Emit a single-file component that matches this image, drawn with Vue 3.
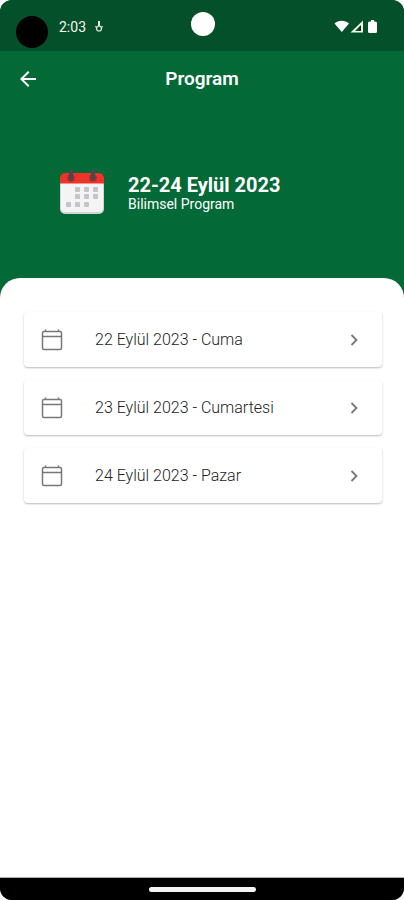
<script setup>
const days = [
  { id: 1, label: '22 Eylül 2023 - Cuma' },
  { id: 2, label: '23 Eylül 2023 - Cumartesi' },
  { id: 3, label: '24 Eylül 2023 - Pazar' },
]
const dots = [
  [26, 20], [35, 20], [44, 20],
  [26, 27], [35, 27], [44, 27],
  [17, 35], [26, 35], [35, 35],
]
</script>

<template>
  <div class="screen">
    <div class="status">
      <span class="bubble"></span>
      <span class="clock">2:03</span>
      <svg class="debug" viewBox="0 0 10 14" aria-hidden="true">
        <path d="M5 1v5" stroke-width="2" />
        <circle cx="5" cy="8.500" r="2.500" />
        <path d="M1.200 6.500L3 7.500M8.800 6.500L7 7.500" />
      </svg>
      <span class="camera"></span>
      <svg class="signals" viewBox="0 0 46 16" aria-hidden="true">
        <path d="M.5 4.500C4.500.8 11 .8 15 4.500L7.800 13z" fill="#fff" />
        <path d="M29 1.500v12H16.500z" fill="#f3f7e6" />
        <path d="M27 6v6h-6z" fill="#04502a" />
        <path d="M25.500 7.500h1.500v4h-1.500z" fill="#0b1c12" />
        <path d="M37 1h3v1.500h1.500A1.500 1.500 0 0 1 43 4v8.500a1.500 1.500 0 0 1-1.500 1.500h-6a1.500 1.500 0 0 1-1.500-1.500V4a1.500 1.500 0 0 1 1.500-1.500H37z" fill="#fff" />
      </svg>
    </div>

    <header class="bar">
      <button class="back" type="button" aria-label="Geri">
        <svg viewBox="0 0 24 24" aria-hidden="true">
          <path d="M20 11H7.830l5.590-5.590L12 4l-8 8 8 8 1.410-1.410L7.830 13H20z" />
        </svg>
      </button>
      <h1>Program</h1>
    </header>

    <section class="hero">
      <svg class="calendar" viewBox="0 0 60 48" aria-hidden="true">
        <path d="M8 13h44v27a5 5 0 0 1-5 5H13a5 5 0 0 1-5-5z" fill="#d3d5d3" />
        <path d="M9 13h42v26a4 4 0 0 1-4 4H13a4 4 0 0 1-4-4z" fill="#f4f4f4" />
        <path d="M8 14.500V9a5 5 0 0 1 5-5h34a5 5 0 0 1 5 5v5.500z" fill="#ee3328" />
        <circle cx="19" cy="9" r="3.800" fill="#a92c25" />
        <circle cx="41" cy="9" r="3.800" fill="#a92c25" />
        <path d="M19 1.500v8M41 1.500v8" stroke="#424b50" stroke-width="4" stroke-linecap="round" />
        <rect v-for="(d, i) in dots" :key="i" :x="d[0] - 3" :y="d[1] - 2" width="5" height="5" rx="1" fill="#c4c5c8" />
      </svg>
      <div>
        <h2>22-24 Eylül 2023</h2>
        <p>Bilimsel Program</p>
      </div>
    </section>

    <main class="sheet">
      <button v-for="day in days" :key="day.id" class="card" type="button">
        <svg class="day-icon" viewBox="0 0 24 24" aria-hidden="true">
          <rect x="2.500" y="3.500" width="19" height="18" rx="1.500" />
          <path d="M2.500 8.500h19M5.500 1.500v2M18.500 1.500v2" />
        </svg>
        <span class="label">{{ day.label }}</span>
        <svg class="chevron" viewBox="0 0 12 12" aria-hidden="true">
          <path d="M3.500 1l5 5-5 5" />
        </svg>
      </button>
    </main>

    <footer class="nav"><span class="handle"></span></footer>
  </div>
</template>

<style>
body {
  margin: 0;
  background: #fff;
}
</style>

<style scoped>
.screen {
  display: flex;
  flex-direction: column;
  min-height: 100vh;
  overflow: hidden;
  border-radius: 12px;
  background: #036937;
  color: #fff;
  font-family: Roboto, "Liberation Sans", sans-serif;
}
.status {
  position: relative;
  display: flex;
  align-items: center;
  box-sizing: border-box;
  height: 51px;
  padding: 2px 24px 0 16px;
  background: #04502a;
}
.bubble {
  width: 32px;
  height: 32px;
  margin: 10px 11px 0 0;
  border-radius: 50%;
  background: #000;
}
.clock {
  font-size: 14px;
  line-height: 16px;
  color: #f3f7ec;
}
.debug {
  width: 10px;
  height: 14px;
  margin-left: 8px;
  fill: none;
  stroke: #e4efdf;
  stroke-width: 1.200;
}
.camera {
  position: absolute;
  top: 12px;
  left: 50%;
  width: 24px;
  height: 24px;
  margin-left: -11px;
  border-radius: 50%;
  background: #fff;
}
.signals {
  width: 46px;
  height: 16px;
  margin-left: auto;
}
.bar {
  display: grid;
  grid-template-columns: 24px 1fr 24px;
  align-items: center;
  height: 56px;
  padding: 0 16px;
}
.back {
  width: 24px;
  height: 24px;
  padding: 0;
  border: 0;
  background: none;
}
.back svg {
  display: block;
  width: 24px;
  height: 24px;
  fill: #fff;
}
h1 {
  margin: 0;
  font-size: 19px;
  line-height: 24px;
  font-weight: 600;
  text-align: center;
}
.hero {
  display: flex;
  align-items: center;
  gap: 16px;
  box-sizing: border-box;
  height: 171px;
  padding: 0 52px;
}
.calendar {
  width: 60px;
  height: 48px;
}
h2 {
  margin: 0;
  font-size: 20px;
  line-height: 22px;
  font-weight: 700;
}
p {
  margin: 0;
  font-size: 14px;
  line-height: 16px;
}
.sheet {
  display: flex;
  flex: 1;
  flex-direction: column;
  gap: 13px;
  padding: 34px 22px 34px 24px;
  border-radius: 20px 20px 0 0;
  background: #fff;
}
.card {
  display: flex;
  align-items: center;
  height: 55px;
  padding: 0 22px 0 16px;
  border: 0;
  border-radius: 4px;
  background: #fff;
  box-shadow: 0 1px 2px rgba(0, 0, 0, 0.28);
  color: #222;
  font-family: inherit;
  font-size: 16px;
  font-weight: 300;
  line-height: 20px;
  text-align: left;
}
.day-icon {
  width: 24px;
  height: 24px;
  fill: none;
  stroke: #777;
  stroke-width: 1.500;
}
.label {
  flex: 1;
  margin-left: 31px;
}
.chevron {
  width: 12px;
  height: 12px;
  fill: none;
  stroke: #777;
  stroke-width: 1.800;
}
.nav {
  display: flex;
  align-items: center;
  justify-content: center;
  height: 22px;
  border-top: 1px solid #aaa;
  background: #000;
}
.handle {
  width: 107px;
  height: 5px;
  border-radius: 3px;
  background: #f4f4f4;
}
</style>
